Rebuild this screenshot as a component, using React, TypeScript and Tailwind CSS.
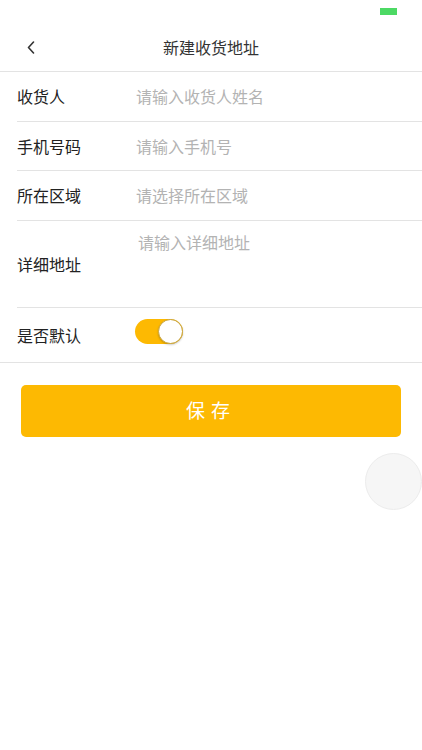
import { useState } from "react";

const rows = [
  { label: "收货人", placeholder: "请输入收货人姓名" },
  { label: "手机号码", placeholder: "请输入手机号" },
  { label: "所在区域", placeholder: "请选择所在区域" },
];

export default function App() {
  const [isDefault, setIsDefault] = useState(true);

  return (
    <div
      className="relative min-h-[750px] w-full bg-white text-[#222]"
      style={{ fontFamily: '"Noto Sans CJK SC", "Noto Sans", sans-serif' }}
    >
      {/* status bar */}
      <div className="flex h-[22px] items-start justify-end pr-[25px] pt-[8px]">
        <div className="h-[7px] w-[17px] bg-[#4cd964]" />
      </div>

      {/* nav bar */}
      <header className="relative flex h-[50px] items-center justify-center border-b border-[#e3e3e3]">
        <button className="absolute left-[24px] top-[15px] flex h-[20px] w-[14px] items-center justify-center">
          <svg width="8" height="13" viewBox="0 0 8 13" fill="none">
            <path d="M6.5 1 L1.5 6.5 L6.5 12" stroke="#333" strokeWidth="1.6" strokeLinecap="round" strokeLinejoin="round" />
          </svg>
        </button>
        <h1 className="text-[16px] text-[#333]">新建收货地址</h1>
      </header>

      <div className="pl-[17px]">
        {rows.map((row) => (
          <div key={row.label} className="flex h-[49.5px] items-center border-b border-[#e3e3e3]">
            <span className="w-[119px] text-[16px]">{row.label}</span>
            <span className="text-[16px] text-[#b3b3b3]">{row.placeholder}</span>
          </div>
        ))}

        <div className="flex h-[87px] border-b border-[#e3e3e3]">
          <span className="w-[121px] self-center text-[16px]">详细地址</span>
          <span className="pt-[9px] text-[16px] text-[#b3b3b3]">请输入详细地址</span>
        </div>

        <div className="flex h-[54px] items-center">
          <span className="w-[118px] text-[16px]">是否默认</span>
          <button
            onClick={() => setIsDefault(!isDefault)}
            className={`relative mb-[7px] h-[25px] w-[48px] rounded-full ${isDefault ? "bg-[#fdb902]" : "bg-[#e5e5e5]"}`}
          >
            <span
              className={`absolute top-0 h-[25px] w-[25px] rounded-full border border-[#c9a43c] bg-white shadow-[0_1px_2px_rgba(0,0,0,0.2)] ${isDefault ? "right-0" : "left-0"}`}
            />
          </button>
        </div>
      </div>
      <div className="border-b border-[#e3e3e3]" />

      <div className="px-[21px] pt-[22px]">
        <button className="flex h-[52px] w-full items-center justify-center rounded-[5px] bg-[#fdb902] text-[19px] tracking-[6px] text-white">
          保存
        </button>
      </div>

      {/* floating assistive button */}
      <div className="absolute left-[365px] top-[453px] h-[57px] w-[57px] rounded-full border border-[#ececec] bg-[#f6f6f6]" />
    </div>
  );
}
